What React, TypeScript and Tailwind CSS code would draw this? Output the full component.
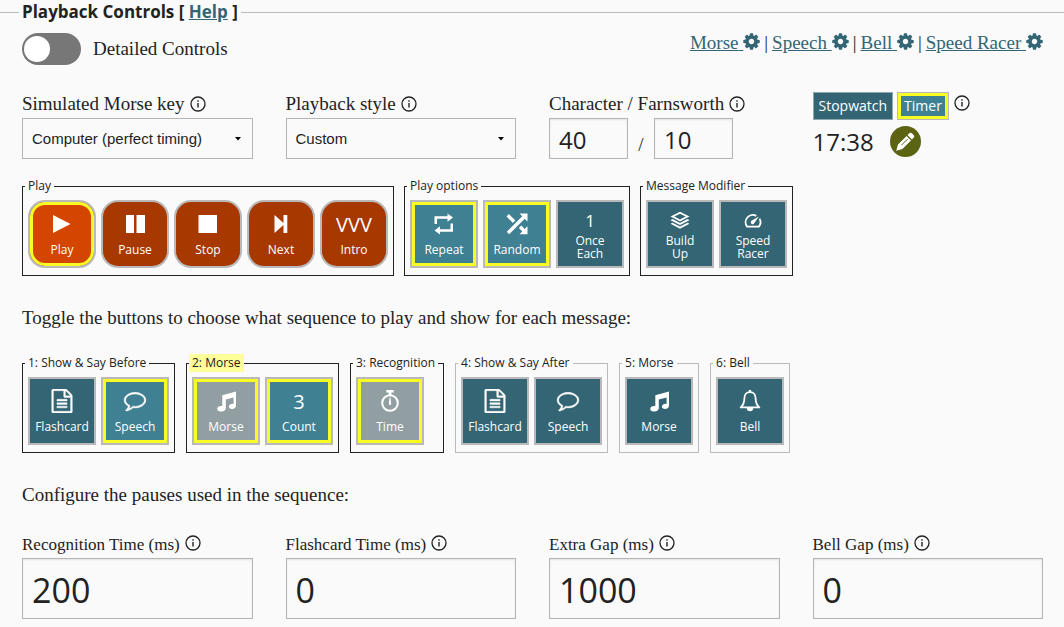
import { useState, type ReactNode } from 'react';

const serif = "font-['Georgia','Liberation_Serif',serif]";
const sans = "font-['Segoe_UI','Open_Sans',sans-serif]";

function InfoIcon() {
  return (
    <svg viewBox="0 0 16 16" className="size-4 shrink-0 text-[#222]" fill="none" stroke="currentColor" aria-hidden="true">
      <circle cx="8" cy="8" r="7" strokeWidth="1.3" />
      <path d="M8 7v4.600M8 4.300v1.400" strokeWidth="1.400" />
    </svg>
  );
}

function CogIcon() {
  return (
    <svg viewBox="100 100 1592 1592" className="inline-block size-[17px] align-[-1px]" fill="currentColor" aria-hidden="true">
      <path d="M1152 896q0-106-75-181t-181-75-181 75-75 181 75 181 181 75 181-75 75-181zm512-109v222q0 12-8 23t-20 13l-185 28q-19 54-39 91 35 50 107 138 10 12 10 25t-9 23q-27 37-99 108t-94 71q-12 0-26-9l-138-108q-44 23-91 38-16 136-29 186-7 28-36 28h-222q-14 0-24.5-8.5t-11.5-21.5l-28-184q-49-16-90-37l-141 107q-10 9-25 9-14 0-25-11-126-114-165-168-7-10-7-23 0-12 8-23 15-21 51-66.5t54-70.5q-27-50-41-99l-183-27q-13-2-21-12.5t-8-23.5v-222q0-12 8-23t19-13l186-28q14-46 39-92-40-57-107-138-10-12-10-24 0-10 9-23 26-36 98.5-107.5t94.5-71.5q13 0 26 10l138 107q44-23 91-38 16-136 29-186 7-28 36-28h222q14 0 24.5 8.5t11.5 21.5l28 184q49 16 90 37l142-107q9-9 24-9 13 0 25 10 129 119 165 170 7 8 7 22 0 12-8 23-15 21-51 66.5t-54 70.5q26 50 41 98l183 28q13 2 21 12.5t8 23.5z" />
    </svg>
  );
}

function Glyph({ children, viewBox = '0 0 24 24' }: { children: ReactNode; viewBox?: string }) {
  return (
    <svg viewBox={viewBox} className="size-6 shrink-0" fill="currentColor" aria-hidden="true">
      {children}
    </svg>
  );
}

const playIcon = <Glyph><path d="M3 3l17.500 9L3 21z" /></Glyph>;
const pauseIcon = <Glyph><path d="M3 3h8v18H3zM13.500 3h8.500v18h-8.500z" /></Glyph>;
const stopIcon = <Glyph><path d="M2.500 3h18.500v18H2.500z" /></Glyph>;
const nextIcon = <Glyph><path d="M5.500 3l9 8V3h3.800v18h-3.800v-8l-9 8z" /></Glyph>;
const repeatIcon = (
  <Glyph>
    <path d="M2.500 12V4.200h13V1.500L21 5.600l-5.500 4.200V6.700H5V12zM21 11.500v8.300H8v2.700l-5.500-4.100L8 14.200v3.100h10.500v-5.800z" />
  </Glyph>
);
const shuffleIcon = (
  <Glyph>
    <path d="M14.500 1.500h8v8l-2.800-2.800L4.200 22.200 1.800 19.800 17.300 4.300z" />
    <path d="M3.900 2.100l6.400 6.400-2.400 2.400-6.400-6.400zM16.300 13.600l3.400 3.400 2.800-2.800v8h-8l2.800-2.800-3.400-3.400z" />
  </Glyph>
);
const layersIcon = (
  <Glyph>
    <path d="M12 3.700l9.500 4.900-9.500 4.900-9.500-4.900zm0 2L6.400 8.600 12 11.500l5.600-2.900z" fillRule="evenodd" />
    <path d="M4.500 11.100l7.500 3.900 7.500-3.900 2 1.100-9.500 4.900-9.500-4.900zM4.500 14.700l7.500 3.900 7.500-3.900 2 1.100-9.500 4.900-9.500-4.900z" />
  </Glyph>
);
const gaugeIcon = (
  <Glyph>
    <path d="M15.300 7.900A7.200 7.200 0 0 0 6.100 18.600h11.800a7.200 7.200 0 0 0 .6-8" fill="none" stroke="currentColor" strokeWidth="1.800" strokeLinejoin="round" />
    <path d="M17.900 8.400l-4.500 6.700a1.900 1.900 0 1 1-2.600-2.500z" />
  </Glyph>
);
const fileIcon = (
  <Glyph viewBox="0 0 1792 1792">
    <path d="M1596 380q28 28 48 76t20 88v1152q0 40-28 68t-68 28h-1344q-40 0-68-28t-28-68v-1600q0-40 28-68t68-28h896q40 0 88 20t76 48zm-444-244v376h376q-10-29-22-41l-313-313q-12-12-41-22zm384 1528v-1024h-416q-40 0-68-28t-28-68v-416h-768v1536h1280zm-1024-864q0-14 9-23t23-9h704q14 0 23 9t9 23v64q0 14-9 23t-23 9h-704q-14 0-23-9t-9-23v-64zm736 224q14 0 23 9t9 23v64q0 14-9 23t-23 9h-704q-14 0-23-9t-9-23v-64q0-14 9-23t23-9h704zm0 256q14 0 23 9t9 23v64q0 14-9 23t-23 9h-704q-14 0-23-9t-9-23v-64q0-14 9-23t23-9h704z" stroke="currentColor" strokeWidth="30" />
  </Glyph>
);
const commentIcon = (
  <Glyph viewBox="-90 -20 1972 1972">
    <path d="M896 384q-204 0-381.500 69.500t-282 187.500-104.500 255q0 112 71.500 213.500t201.500 175.500l87 50-27 96q-24 91-70 172 152-63 275-171l43-38 57 6q69 8 130 8 204 0 381.500-69.500t282-187.500 104.500-255-104.500-255-282-187.500-381.500-69.500zm896 512q0 174-120 321.500t-326 233-450 85.500q-70 0-145-8-198 175-460 242-49 14-114 22h-5q-15 0-27-10.500t-16-27.500v-1q-3-4-.5-12t2-10 4.500-9.500l6-9 7-8.500 8-9q7-8 31-34.500t34.500-38 31-39.500 32.500-51 27-59 26-76q-157-89-247.500-220t-90.500-281q0-174 120-321.500t326-233 450-85.500 450 85.500 326 233 120 321.500z" stroke="currentColor" strokeWidth="35" />
  </Glyph>
);
const musicIcon = (
  <Glyph>
    <path d="M8.300 6.200L22 2.600v14.200c0 1.900-1.700 3.200-4 3.200-1.900 0-3.100-1-3.100-2.400 0-1.700 1.700-2.900 3.900-2.900h.8V8.500l-7.800 2v8.800c0 1.900-1.900 3.300-4.300 3.300-2 0-4.300-.9-4.300-2.700 0-1.700 1.700-2.900 3.900-2.900h1.200z" />
  </Glyph>
);
const stopwatchIcon = (
  <Glyph>
    <circle cx="12" cy="14" r="7.800" fill="none" stroke="currentColor" strokeWidth="2" />
    <path d="M8.300 1h7.400v2.400h-2.300v3h-2.800v-3H8.300zM11.500 8.500h1l.7 6.300a1.200 1.200 0 1 1-2.400 0z" />
  </Glyph>
);
const bellIcon = (
  <Glyph>
    <path d="M12 3.100c-3.600 0-5.600 2.700-5.600 6.200 0 4.400-1.200 6.900-3.700 9.100h18.600c-2.500-2.200-3.700-4.700-3.700-9.100 0-3.500-2-6.200-5.600-6.200z" fill="none" stroke="currentColor" strokeWidth="1.800" strokeLinejoin="round" />
    <path d="M10.700 3.200V2a1.300 1.300 0 0 1 2.600 0v1.200zM8.800 19h6.400a3.200 3.200 0 0 1-6.400 0z" />
  </Glyph>
);

type Tone = 'teal' | 'red' | 'muted';

function Tile({ icon, label, tone = 'teal', active = false, stacked = false }: {
  icon: ReactNode; label: string; tone?: Tone; active?: boolean; stacked?: boolean;
}) {
  const colour =
    tone === 'red'
      ? active ? 'bg-[#d34500] rounded-[17px]' : 'bg-[#a73800] rounded-[17px]'
      : tone === 'muted' ? 'bg-[#919fa3]'
      : active ? 'bg-[#408093]' : 'bg-[#336575]';
  return (
    <button
      type="button"
      disabled={tone === 'muted'}
      aria-pressed={active}
      className={`flex size-[68px] shrink-0 flex-col items-center border-2 border-[#b9b9b9] text-[12px] leading-[13px] text-white ${stacked ? 'pt-2' : 'pt-[10px]'} ${colour} ${active ? 'shadow-[inset_0_0_0_3px_#f9fb24]' : ''}`}
    >
      <span className={`flex items-center justify-center ${stacked ? 'h-5 text-[17px]' : 'h-6 text-[20px]'}`}>{icon}</span>
      <span className={stacked ? 'mt-1 w-10' : 'mt-[7px]'}>{label}</span>
    </button>
  );
}

function Group({ title, children, soft = false, highlight = false }: {
  title: string; children: ReactNode; soft?: boolean; highlight?: boolean;
}) {
  return (
    <fieldset className={`border px-[5px] pt-[5px] pb-[7px] ${soft ? 'border-[#bbb]' : 'border-[#222]'}`}>
      <legend className={`-ml-[3px] px-[3px] text-[12px] leading-[18px] whitespace-nowrap ${highlight ? 'bg-[#ffff99]' : ''}`}>{title}</legend>
      <div className="flex gap-[5px]">{children}</div>
    </fieldset>
  );
}

function SelectField({ id, label, options }: { id: string; label: string; options: string[] }) {
  return (
    <div>
      <div className={`flex h-7 items-center gap-[5px] ${serif} text-[19px]`}>
        <label htmlFor={id}>{label}</label>
        <InfoIcon />
      </div>
      <div className="relative">
        <select id={id} className="h-[41px] w-full appearance-none border border-[#b5b5b5] bg-[#fafafa] px-[9px] pt-[2px] font-['Liberation_Sans',sans-serif] text-[15px]">
          {options.map((o) => <option key={o}>{o}</option>)}
        </select>
        <svg viewBox="0 0 6 4" className="pointer-events-none absolute top-[19px] right-3 h-1 w-1.5" aria-hidden="true">
          <path d="M0 0h6L3 3.500z" />
        </svg>
      </div>
    </div>
  );
}

function NumberField({ id, label, value }: { id: string; label: string; value: string }) {
  return (
    <div>
      <div className={`flex h-[27px] items-center gap-[5px] ${serif} text-[17px]`}>
        <label htmlFor={id}>{label}</label>
        <span className="pb-1"><InfoIcon /></span>
      </div>
      <input id={id} type="text" inputMode="numeric" defaultValue={value} className="h-[61px] w-full border border-[#b5b5b5] bg-[#fafafa] px-[9px] pt-[2px] text-[34px] shadow-[inset_0_1px_2px_rgba(10,10,10,0.1)]" />
    </div>
  );
}

const links = ['Morse', 'Speech', 'Bell', 'Speed Racer'];
const speedInput = 'h-[41px] w-[79px] border border-[#b5b5b5] bg-[#fafafa] px-[9px] pt-[2px] text-[24px] shadow-[inset_0_1px_2px_rgba(10,10,10,0.1)]';

export default function App() {
  const [detailed, setDetailed] = useState(false);
  return (
    <main className={`min-h-screen bg-[#fafafa] text-[#222] ${sans}`}>
      <fieldset className="min-w-0 border-t border-[#bbb] pr-[21px] pb-2 pl-[22px]">
        <legend className="-ml-[3px] px-[3px] text-[17px] leading-6 font-bold">
          Playback Controls [ <a href="#help" className="text-[#336575] underline">Help</a> ]
        </legend>

        <div className="mt-[9px] flex items-start justify-between">
          <label className={`flex items-center gap-3 ${serif} text-[19px]`}>
            <input
              type="checkbox"
              role="switch"
              checked={detailed}
              onChange={(e) => setDetailed(e.target.checked)}
              className="flex h-8 w-[59px] appearance-none items-center rounded-full bg-[#777] px-[2px] before:size-[26px] before:rounded-full before:bg-white before:content-[''] checked:justify-end checked:bg-[#336575]"
            />
            Detailed Controls
          </label>
          <nav className={`flex gap-1 ${serif} text-[19px] leading-5`}>
            {links.map((name, i) => (
              <span key={name} className="flex gap-1">
                {i > 0 && <span>|</span>}
                <a href={`#${name.toLowerCase().replace(' ', '-')}`} className="text-[#336575] underline">{name} <CogIcon /></a>
              </span>
            ))}
          </nav>
        </div>

        <div className="mt-[25px] grid grid-cols-4 gap-[33px]">
          <SelectField id="key" label="Simulated Morse key" options={['Computer (perfect timing)']} />
          <SelectField id="style" label="Playback style" options={['Custom']} />
          <div>
            <div className={`flex h-7 items-center gap-[5px] ${serif} text-[19px] whitespace-nowrap`}>
              <label htmlFor="character">Character / Farnsworth</label>
              <InfoIcon />
            </div>
            <div className="flex items-end">
              <input id="character" type="text" inputMode="numeric" defaultValue="40" className={speedInput} />
              <span className={`w-[26px] text-center ${serif} text-[19px]`}>/</span>
              <input aria-label="Farnsworth" type="text" inputMode="numeric" defaultValue="10" className={speedInput} />
            </div>
          </div>
          <div className="pt-[2px]">
            <div className="flex items-start gap-1">
              <button type="button" className="h-7 border border-[#8fa8b0] bg-[#336575] px-[5px] text-[14px] leading-5 text-white">Stopwatch</button>
              <button type="button" aria-pressed="true" className="h-7 border border-[#b9b9b9] bg-[#408093] px-[6px] text-[14px] leading-5 text-white shadow-[inset_0_0_0_3px_#f9fb24]">Timer</button>
              <span className="pt-[3px] pl-[1px]"><InfoIcon /></span>
            </div>
            <div className="mt-[6px] flex items-center gap-4">
              <span className="text-[24px] leading-[30px]">17:38</span>
              <button type="button" aria-label="Edit timer" className="flex size-[31px] items-center justify-center rounded-full bg-[#5c6414] text-white">
                <svg viewBox="0 0 20 20" className="size-5" fill="currentColor" aria-hidden="true">
                  <path d="M1.200 18.800L3 12.600 11.600 4l4.400 4.400-8.600 8.600zM12.500 3.100l1.900-1.900c.8-.8 1.800-.6 2.600.2l1.600 1.600c.8.8 1 1.800.2 2.600l-1.900 1.900z" />
                  <path d="M12.700 6.900L6.400 13.200" stroke="#5c6414" strokeWidth="1" />
                </svg>
              </button>
            </div>
          </div>
        </div>

        <div className="mt-[18px] flex flex-wrap gap-[10px]">
          <Group title="Play">
            <Tile tone="red" active icon={playIcon} label="Play" />
            <Tile tone="red" icon={pauseIcon} label="Pause" />
            <Tile tone="red" icon={stopIcon} label="Stop" />
            <Tile tone="red" icon={nextIcon} label="Next" />
            <Tile tone="red" icon="VVV" label="Intro" />
          </Group>
          <Group title="Play options">
            <Tile active icon={repeatIcon} label="Repeat" />
            <Tile active icon={shuffleIcon} label="Random" />
            <Tile stacked icon="1" label="Once Each" />
          </Group>
          <Group title="Message Modifier">
            <Tile stacked icon={layersIcon} label="Build Up" />
            <Tile stacked icon={gaugeIcon} label="Speed Racer" />
          </Group>
        </div>

        <p className={`mt-7 ${serif} text-[19px] leading-7`}>Toggle the buttons to choose what sequence to play and show for each message:</p>

        <div className="mt-[22px] flex flex-wrap gap-[11px]">
          <Group title="1: Show & Say Before">
            <Tile icon={fileIcon} label="Flashcard" />
            <Tile active icon={commentIcon} label="Speech" />
          </Group>
          <Group title="2: Morse" highlight>
            <Tile tone="muted" active icon={musicIcon} label="Morse" />
            <Tile active icon="3" label="Count" />
          </Group>
          <Group title="3: Recognition">
            <Tile tone="muted" active icon={stopwatchIcon} label="Time" />
          </Group>
          <Group title="4: Show & Say After" soft>
            <Tile icon={fileIcon} label="Flashcard" />
            <Tile icon={commentIcon} label="Speech" />
          </Group>
          <Group title="5: Morse" soft>
            <Tile icon={musicIcon} label="Morse" />
          </Group>
          <Group title="6: Bell" soft>
            <Tile icon={bellIcon} label="Bell" />
          </Group>
        </div>

        <p className={`mt-7 ${serif} text-[19px] leading-7`}>Configure the pauses used in the sequence:</p>

        <div className="mt-[22px] grid grid-cols-4 gap-[33px]">
          <NumberField id="recognition" label="Recognition Time (ms)" value="200" />
          <NumberField id="flashcard" label="Flashcard Time (ms)" value="0" />
          <NumberField id="extra" label="Extra Gap (ms)" value="1000" />
          <NumberField id="bell" label="Bell Gap (ms)" value="0" />
        </div>
      </fieldset>
    </main>
  );
}
